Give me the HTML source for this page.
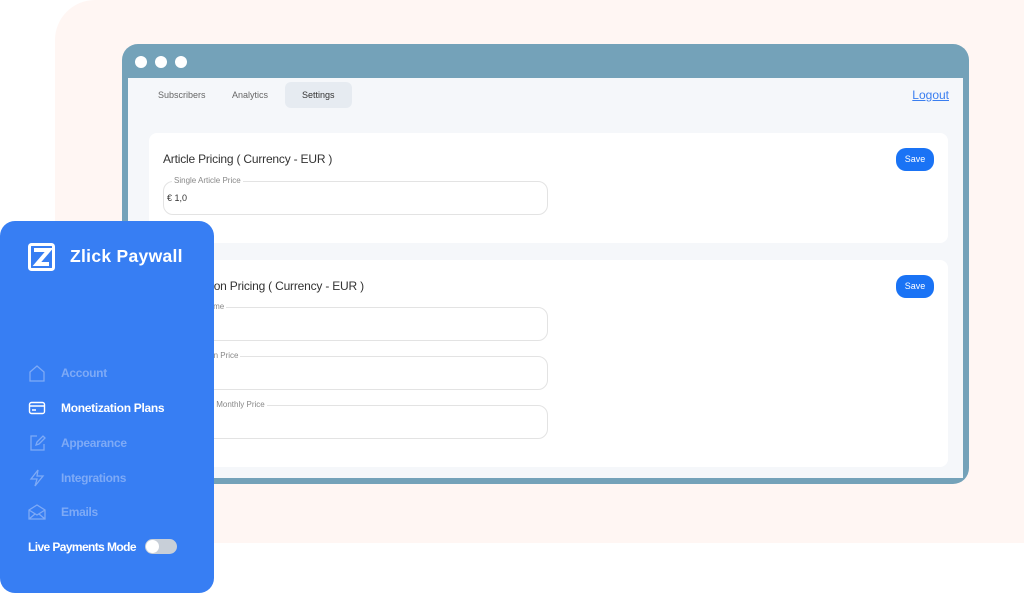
<!DOCTYPE html>
<html><head><meta charset="utf-8"><style>
*{margin:0;padding:0;box-sizing:border-box}
body{width:1024px;height:593px;background:#fff;position:relative;overflow:hidden;font-family:"Liberation Sans",sans-serif}
.peach{position:absolute;left:55px;top:0;width:1000px;height:543px;background:#fff6f3;border-top-left-radius:40px}
.win{position:absolute;left:122px;top:44px;width:847px;height:440px;background:#74a2b9;border-radius:16px}
.dot{position:absolute;top:12px;width:12px;height:12px;border-radius:50%;background:#fff}
.inner{position:absolute;left:6px;top:34px;width:835px;height:400px;background:#f5f7fa}
.tab{position:absolute;top:12px;font-size:9px;color:#666}
.card{position:absolute;left:21px;width:799px;background:#fff;border-radius:8px}
.ttl{position:absolute;left:14px;font-size:12px;color:#333;letter-spacing:-0.2px}
.save{position:absolute;right:14px;width:38px;height:23px;border-radius:10px;background:#1a73f5;color:#fff;font-size:9px;text-align:center;line-height:23px}
.inp{position:absolute;left:14px;width:385px;height:34px;border:1px solid #e3e3e3;border-radius:10px}
.lbl{position:absolute;left:8px;top:-6px;background:#fff;padding:0 2px;font-size:8px;color:#888}
.side{position:absolute;left:0;top:221px;width:214px;height:372px;background:#377ef3;border-radius:15px}
.item{position:absolute;left:61px;font-size:12px;color:#7eaaf6;font-weight:bold;letter-spacing:-0.3px}
.ic{position:absolute;left:28px;width:18px;height:18px}
</style></head><body>
<div class="peach"></div>
<div class="win">
<div class="dot" style="left:13px"></div><div class="dot" style="left:33px"></div><div class="dot" style="left:53px"></div>
<div class="inner">
<div class="tab" style="left:30px">Subscribers</div>
<div class="tab" style="left:104px">Analytics</div>
<div style="position:absolute;left:157px;top:4px;width:67px;height:26px;background:#e6ebf1;border-radius:6px"></div>
<div class="tab" style="left:174px;color:#333">Settings</div>
<div style="position:absolute;right:14px;top:10px;font-size:12px;color:#3a7ef0;text-decoration:underline">Logout</div>
<div class="card" style="top:55px;height:110px">
<div class="ttl" style="top:19px">Article Pricing ( Currency - EUR )</div>
<div class="save" style="top:15px">Save</div>
<div class="inp" style="top:48px"><span class="lbl">Single Article Price</span><span style="position:absolute;left:3px;top:11px;font-size:9px;color:#333">€ 1,0</span></div>
</div>
<div class="card" style="top:182px;height:207px">
<div class="ttl" style="top:19px">Subscription Pricing ( Currency - EUR )</div>
<div class="save" style="top:15px">Save</div>
<div class="inp" style="top:47px"><span class="lbl" style="left:20px">Plan name</span></div>
<div class="inp" style="top:96px"><span class="lbl">Subscription Price</span></div>
<div class="inp" style="top:145px"><span class="lbl">Discounted Monthly Price</span></div>
</div>
</div>
</div>
<div class="side">
<svg style="position:absolute;left:28px;top:22px" width="27" height="28" viewBox="0 0 27 28"><rect x="1.5" y="1.5" width="24" height="25" rx="2" fill="none" stroke="#fff" stroke-width="3"/><path d="M6 7h15L9 21h12" fill="none" stroke="#fff" stroke-width="4"/></svg>
<div style="position:absolute;left:70px;top:25px;font-size:17.5px;font-weight:bold;color:#fff;letter-spacing:0.3px">Zlick Paywall</div>
<svg class="ic" style="top:143px" viewBox="0 0 18 18"><path d="M2 8L9 2l7 6v9H2z" fill="none" stroke="#7eaaf6" stroke-width="1.3"/></svg>
<div class="item" style="top:145px">Account</div>
<svg class="ic" style="top:178px" viewBox="0 0 18 18"><rect x="1.5" y="3.5" width="15" height="11" rx="2" fill="none" stroke="#fff" stroke-width="1.4"/><path d="M1.5 7h15M4 11h4" stroke="#fff" stroke-width="1.4"/></svg>
<div class="item" style="top:180px;color:#fff">Monetization Plans</div>
<svg class="ic" style="top:213px" viewBox="0 0 18 18"><path d="M9 2H3v14h13v-6M8 11l1-3 6-6 2 2-6 6z" fill="none" stroke="#7eaaf6" stroke-width="1.3"/></svg>
<div class="item" style="top:215px">Appearance</div>
<svg class="ic" style="top:248px" viewBox="0 0 18 18"><path d="M10 1L3 10h6l-2 7 8-10H9z" fill="none" stroke="#7eaaf6" stroke-width="1.3"/></svg>
<div class="item" style="top:250px">Integrations</div>
<svg class="ic" style="top:282px" viewBox="0 0 18 18"><path d="M1 7l8-5 8 5v9H1zM1 7l8 5 8-5M1 16l6-5M17 16l-6-5" fill="none" stroke="#7eaaf6" stroke-width="1.3"/></svg>
<div class="item" style="top:284px">Emails</div>
<div style="position:absolute;left:28px;top:319px;font-size:12px;font-weight:bold;color:#fff;letter-spacing:-0.6px">Live Payments Mode</div>
<div style="position:absolute;left:145px;top:318px;width:32px;height:15px;border-radius:8px;background:#c8cfd8"><div style="position:absolute;left:1px;top:1px;width:13px;height:13px;border-radius:50%;background:#fff"></div></div>
</div>
</body></html>
